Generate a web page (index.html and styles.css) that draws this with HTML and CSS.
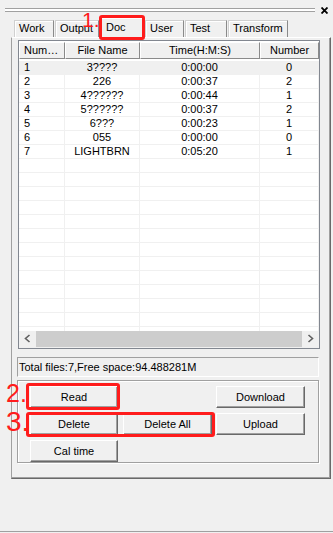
FILE: index.html
```html
<!DOCTYPE html>
<html>
<head>
<meta charset="utf-8">
<link rel="stylesheet" href="styles.css">
</head>
<body>
<div class="app">
  <div class="toolbar">
    <div class="gripper"></div>
    <svg class="close" width="7" height="7" viewBox="0 0 7 7"><path d="M0.5 0.5 L6.5 6.5 M6.5 0.5 L0.5 6.5" stroke="#000" stroke-width="1.8"/></svg>
  </div>
  <div class="tabs">
    <div class="tab t-work">Work</div>
    <div class="tab t-output">Output</div>
    <div class="tab t-doc active">Doc</div>
    <div class="tab t-user">User</div>
    <div class="tab t-test">Test</div>
    <div class="tab t-transform">Transform</div>
  </div>
  <div class="panel">
    <div class="list">
      <div class="lhead">
        <div class="hc c1 hleft">Num…</div>
        <div class="hc c2">File Name</div>
        <div class="hc c3">Time(H:M:S)</div>
        <div class="hc c4">Number</div>
      </div>
      <div class="lbody">
        <div class="row sel"><div class="c c1 cleft">1</div><div class="c c2">3????</div><div class="c c3">0:00:00</div><div class="c c4">0</div></div>
        <div class="row"><div class="c c1 cleft">2</div><div class="c c2">226</div><div class="c c3">0:00:37</div><div class="c c4">2</div></div>
        <div class="row"><div class="c c1 cleft">3</div><div class="c c2">4??????</div><div class="c c3">0:00:44</div><div class="c c4">1</div></div>
        <div class="row"><div class="c c1 cleft">4</div><div class="c c2">5??????</div><div class="c c3">0:00:37</div><div class="c c4">2</div></div>
        <div class="row"><div class="c c1 cleft">5</div><div class="c c2">6???</div><div class="c c3">0:00:23</div><div class="c c4">1</div></div>
        <div class="row"><div class="c c1 cleft">6</div><div class="c c2">055</div><div class="c c3">0:00:00</div><div class="c c4">0</div></div>
        <div class="row"><div class="c c1 cleft">7</div><div class="c c2">LIGHTBRN</div><div class="c c3">0:05:20</div><div class="c c4">1</div></div>
        <div class="row"><div class="c c1"></div><div class="c c2"></div><div class="c c3"></div><div class="c c4"></div></div>
        <div class="row"><div class="c c1"></div><div class="c c2"></div><div class="c c3"></div><div class="c c4"></div></div>
        <div class="row"><div class="c c1"></div><div class="c c2"></div><div class="c c3"></div><div class="c c4"></div></div>
        <div class="row"><div class="c c1"></div><div class="c c2"></div><div class="c c3"></div><div class="c c4"></div></div>
        <div class="row"><div class="c c1"></div><div class="c c2"></div><div class="c c3"></div><div class="c c4"></div></div>
        <div class="row"><div class="c c1"></div><div class="c c2"></div><div class="c c3"></div><div class="c c4"></div></div>
        <div class="row"><div class="c c1"></div><div class="c c2"></div><div class="c c3"></div><div class="c c4"></div></div>
        <div class="row"><div class="c c1"></div><div class="c c2"></div><div class="c c3"></div><div class="c c4"></div></div>
        <div class="row"><div class="c c1"></div><div class="c c2"></div><div class="c c3"></div><div class="c c4"></div></div>
        <div class="row"><div class="c c1"></div><div class="c c2"></div><div class="c c3"></div><div class="c c4"></div></div>
        <div class="row"><div class="c c1"></div><div class="c c2"></div><div class="c c3"></div><div class="c c4"></div></div>
        <div class="row"><div class="c c1"></div><div class="c c2"></div><div class="c c3"></div><div class="c c4"></div></div>
        <div class="row"><div class="c c1"></div><div class="c c2"></div><div class="c c3"></div><div class="c c4"></div></div>
      </div>
      <div class="hscroll">
        <div class="sbtn"><svg width="17" height="16" viewBox="0 0 17 16"><polyline points="10.5,4 6.5,7.5 10.5,11" fill="none" stroke="#606060" stroke-width="1.6"/></svg></div>
        <div class="thumb"></div>
        <div class="sbtn"><svg width="17" height="16" viewBox="0 0 17 16"><polyline points="6.5,4 10.5,7.5 6.5,11" fill="none" stroke="#606060" stroke-width="1.6"/></svg></div>
      </div>
    </div>
    <div class="status">Total files:7,Free space:94.488281M</div>
    <div class="group">
      <div class="btns">
        <div class="btn r1 k1">Read</div>
        <div class="btn r1 k3">Download</div>
        <div class="btn r2 k1">Delete</div>
        <div class="btn r2 k2">Delete All</div>
        <div class="btn r2 k3">Upload</div>
        <div class="btn r3 k1">Cal time</div>
      </div>
    </div>
  </div>

  <div class="mark-box m-doc"></div>
  <div class="mark-box m-read"></div>
  <div class="mark-box m-del"></div>
  <div class="mark-num n1">1.</div>
  <div class="mark-num n2">2.</div>
  <div class="mark-num n3">3.</div>
</div>
</body>
</html>
```

FILE: styles.css
```css
* { box-sizing: border-box; }
body {
  margin: 0;
  background: #f0f0f0;
  font-family: "Liberation Sans", Arial, sans-serif;
  font-size: 11px;
  color: #000;
}
.app {
  position: relative;
  width: 333px;
  height: 532px;
  border-bottom: 1px solid #a0a0a0;
  overflow: hidden;
}
.toolbar {
  height: 16px;
  display: flex;
  padding-top: 8px;
}
.gripper {
  margin-left: 5px;
  width: 310px;
  height: 4px;
  border-top: 1px solid #a0a0a0;
  border-bottom: 1px solid #a0a0a0;
  background: #fff;
}
.close {
  margin-left: 6px;
  margin-top: -1px;
}
.tabs {
  display: flex;
  align-items: flex-end;
  height: 21px;
  padding-left: 14px;
  position: relative;
  z-index: 1;
}
.tab {
  height: 17px;
  margin-right: 1px;
  border: 1px solid;
  border-bottom: none;
  border-color: #d0d0d0 #8a8a8a #d0d0d0 #d0d0d0;
  box-shadow: inset 1px 1px 0 #fff;
  text-align: left;
  padding-left: 4px;
  line-height: 15px;
  background: #f0f0f0;
  white-space: nowrap;
}
.t-work { width: 40px; }
.t-output { width: 44px; }
.t-doc { width: 44px; }
.t-user { width: 39px; }
.t-test { width: 42px; }
.t-transform { width: 60px; }
.tab.active {
  height: 21px;
  margin-bottom: -1px;
  padding-top: 2px;
  padding-left: 5px;
}
.panel {
  margin-left: 11px;
  width: 320px;
  height: 442px;
  border: 1px solid;
  border-color: #fff #696969 #696969 #a0a0a0;
  box-shadow: inset -1px -1px 0 #a0a0a0;
  padding-top: 2px;
  display: flex;
  flex-direction: column;
}
.list {
  margin-left: 6px;
  width: 302px;
  height: 309px;
  flex: none;
  border: 1px solid #828790;
  background: #fff;
  display: flex;
  flex-direction: column;
}
.lhead {
  display: flex;
  height: 20px;
  padding: 1px 0 2px;
  flex: none;
}
.hc {
  height: 17px;
  background: #f0f0f0;
  border: 1px solid;
  border-color: #fff #8a8a8a #8a8a8a #fff;
  text-align: center;
  line-height: 15px;
  white-space: nowrap;
  overflow: hidden;
}
.hc.hleft { text-align: left; padding-left: 4px; }
.c1 { width: 46px; }
.c2 { width: 75px; }
.c3 { width: 120px; }
.c4 { width: 59px; }
.lbody {
  height: 270px;
  overflow: hidden;
  flex: none;
}
.row {
  display: flex;
  height: 14px;
}
.row.sel { background: #f0f0f0; }
.c {
  height: 14px;
  border-right: 1px solid #f0f0f0;
  border-bottom: 1px solid #f0f0f0;
  text-align: center;
  line-height: 13px;
  white-space: nowrap;
}
.c.cleft { text-align: left; padding-left: 5px; }
.hscroll {
  height: 17px;
  display: flex;
  background: #f0f0f0;
  flex: none;
}
.sbtn {
  width: 17px;
  height: 16px;
}
.thumb {
  flex: 1;
  height: 16px;
  background: #cdcdcd;
}
.status {
  margin: 8px 0 0 5px;
  width: 302px;
  height: 20px;
  flex: none;
  border: 1px solid;
  border-color: #a0a0a0 #fff #fff #a0a0a0;
  padding-left: 1px;
  line-height: 18px;
  white-space: nowrap;
}
.group {
  margin: 3px 0 0 5px;
  width: 302px;
  height: 83px;
  flex: none;
  border: 1px solid #a0a0a0;
  box-shadow: 1px 1px 0 #fff, inset 1px 1px 0 #fff;
  padding: 5px 0 0 12px;
}
.btns {
  display: grid;
  grid-template-columns: 88px 5px 89px 4px 89px;
  grid-template-rows: 22px 22px 22px;
  row-gap: 5px;
}
.r1 { grid-row: 1; }
.r2 { grid-row: 2; }
.r3 { grid-row: 3; }
.k1 { grid-column: 1; }
.k2 { grid-column: 3; }
.k3 { grid-column: 5; }
.btn {
  border: 1px solid;
  border-color: #fff #696969 #696969 #fff;
  box-shadow: inset -1px -1px 0 #a0a0a0;
  background: #f0f0f0;
  text-align: center;
  line-height: 20px;
  white-space: nowrap;
}
.mark-box {
  position: absolute;
  z-index: 2;
  border: 3px solid #ff1c1c;
  border-radius: 3px;
}
.m-doc { left: 99px; top: 15px; width: 46px; height: 25px; }
.m-read { left: 26px; top: 383px; width: 94px; height: 27px; }
.m-del { left: 26px; top: 412px; width: 189px; height: 25px; }
.mark-num {
  position: absolute;
  z-index: 2;
  color: #ff1c1c;
  font-family: "Liberation Sans", Arial, sans-serif;
  line-height: 1;
  white-space: nowrap;
}
.n1 { left: 82px; top: 9px; font-size: 21px; }
.n2 { left: 6px; top: 381px; font-size: 25px; }
.n3 { left: 6px; top: 408px; font-size: 28px; }
```
